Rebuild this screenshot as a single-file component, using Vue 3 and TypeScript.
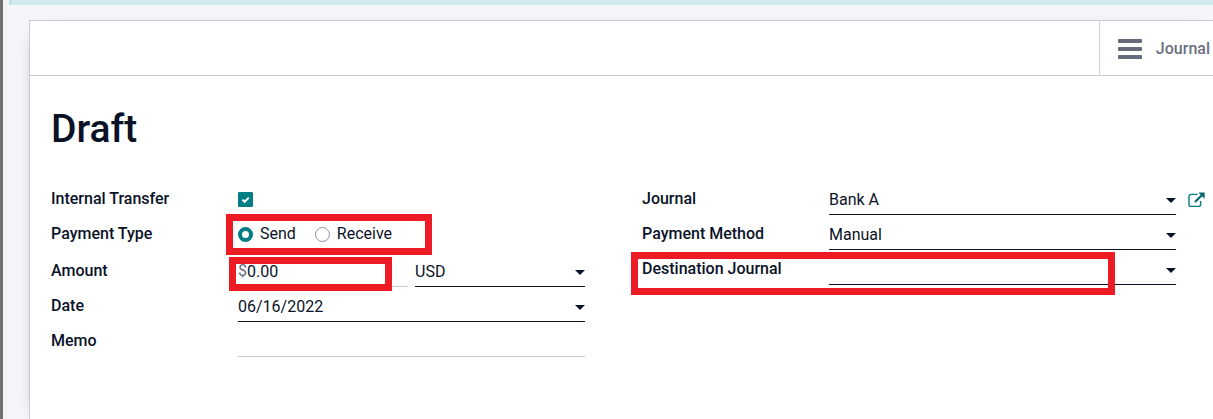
<script setup lang="ts">
import { ref } from 'vue'

const internalTransfer = ref(true)
const paymentType = ref<'send' | 'receive'>('send')
const amount = ref('0.00')
const currency = ref('USD')
const date = ref('06/16/2022')
const memo = ref('')
const journal = ref('Bank A')
const method = ref('Manual')
const destination = ref('')
</script>

<template>
  <div class="page">
    <div class="topbar"></div>
    <main class="sheet">
      <header class="buttons">
        <button type="button" class="stat">
          <svg class="bars" viewBox="0 0 24 20" aria-hidden="true">
            <rect width="24" height="4" rx="1" />
            <rect y="8" width="24" height="4" rx="1" />
            <rect y="16" width="24" height="4" rx="1" />
          </svg>
          <span>Journal</span>
        </button>
      </header>
      <form class="body" @submit.prevent>
        <h1>Draft</h1>
        <div class="groups">
          <div class="group">
            <div class="row">
              <label for="internal">Internal Transfer</label>
              <div class="cell">
                <span class="check">
                  <input id="internal" v-model="internalTransfer" type="checkbox" />
                  <svg v-if="internalTransfer" viewBox="0 0 15 15" aria-hidden="true">
                    <path d="M4.4 7.6 6.7 9.8 10.8 5.6" />
                  </svg>
                </span>
              </div>
            </div>
            <div class="row" role="radiogroup" aria-labelledby="ptype">
              <span id="ptype" class="label">Payment Type</span>
              <div class="cell tall">
                <label class="option"><input v-model="paymentType" type="radio" name="ptype" value="send" />Send</label>
                <label class="option"><input v-model="paymentType" type="radio" name="ptype" value="receive" />Receive</label>
                <span class="mark mark-type"></span>
              </div>
            </div>
            <div class="row">
              <label for="amount">Amount</label>
              <div class="cell split">
                <div class="field soft">
                  <span class="symbol">$</span>
                  <input id="amount" v-model="amount" type="text" />
                  <span class="mark mark-amount"></span>
                </div>
                <div class="field">
                  <select v-model="currency" aria-label="Currency">
                    <option>USD</option>
                  </select>
                  <svg class="caret" viewBox="0 0 10 5" aria-hidden="true"><path d="M0 0h10L5 5z" /></svg>
                </div>
              </div>
            </div>
            <div class="row">
              <label for="date">Date</label>
              <div class="field">
                <input id="date" v-model="date" type="text" />
                <svg class="caret" viewBox="0 0 10 5" aria-hidden="true"><path d="M0 0h10L5 5z" /></svg>
              </div>
            </div>
            <div class="row">
              <label for="memo">Memo</label>
              <div class="field soft"><input id="memo" v-model="memo" type="text" /></div>
            </div>
          </div>

          <div class="group">
            <div class="row">
              <label for="journal">Journal</label>
              <div class="cell">
                <div class="field">
                  <select id="journal" v-model="journal">
                    <option>Bank A</option>
                  </select>
                  <svg class="caret" viewBox="0 0 10 5" aria-hidden="true"><path d="M0 0h10L5 5z" /></svg>
                </div>
                <a class="external" href="#" aria-label="Open journal">
                  <svg viewBox="0 0 17 16" aria-hidden="true">
                    <path class="frame" d="M9.5 2.4H3a2 2 0 0 0-2 2v8a2 2 0 0 0 2 2h7.6a2 2 0 0 0 2-2V9" />
                    <path class="shaft" d="M7 10 14 3" />
                    <path class="head" d="M10.4.6h6.2v6.2z" />
                  </svg>
                </a>
              </div>
            </div>
            <div class="row">
              <label for="method">Payment Method</label>
              <div class="field">
                <select id="method" v-model="method">
                  <option>Manual</option>
                </select>
                <svg class="caret" viewBox="0 0 10 5" aria-hidden="true"><path d="M0 0h10L5 5z" /></svg>
              </div>
            </div>
            <div class="row">
              <label for="destination">Destination Journal</label>
              <div class="field">
                <select id="destination" v-model="destination">
                  <option value=""></option>
                </select>
                <svg class="caret" viewBox="0 0 10 5" aria-hidden="true"><path d="M0 0h10L5 5z" /></svg>
              </div>
              <span class="mark mark-destination"></span>
            </div>
          </div>
        </div>
      </form>
    </main>
  </div>
</template>

<style>
body {
  margin: 0;
}
</style>

<style scoped>
.page {
  box-sizing: border-box;
  min-height: 100vh;
  display: flex;
  flex-direction: column;
  border-left: 3px solid #707070;
  padding-left: 6px;
  background: linear-gradient(to right, #f4f3f1 6px, #f5f6fa 6px);
  overflow: hidden;
  color: #0a1227;
  font: 400 16px/20px Roboto, "Liberation Sans", sans-serif;
}
.topbar {
  height: 5px;
  border-left: 3px solid #bce3e9;
  background: #d2ebef;
}
.sheet {
  flex: 1;
  margin: 15px 0 0 20px;
  border: solid #c9cad4;
  border-width: 1px 0 0 1px;
  background: #fff;
  box-shadow: 0 5px 20px -15px #000;
}
.buttons {
  display: flex;
  justify-content: flex-end;
  height: 54px;
  border-bottom: 1px solid #c9cad4;
}
.stat {
  display: flex;
  align-items: center;
  gap: 14px;
  padding: 2px 3px 0 18px;
  border: 0;
  border-left: 1px solid #d3d4dc;
  background: none;
  color: #6b6f7f;
  font: inherit;
  font-weight: 500;
}
.bars {
  width: 24px;
  height: 20px;
  fill: #666b7c;
}
.body {
  padding: 29px 37px 24px 21px;
}
h1 {
  margin: 0 0 31px;
  font-size: 39px;
  line-height: 48px;
  font-weight: 500;
}
.groups {
  display: grid;
  grid-template-columns: 1fr 1fr;
  gap: 57px;
}
.group {
  display: flex;
  flex-direction: column;
  gap: 4px;
}
.row {
  position: relative;
  display: grid;
  grid-template-columns: 187px 1fr;
}
.row > label,
.label {
  line-height: 30px;
  font-weight: 500;
}
.cell {
  position: relative;
  display: flex;
  align-items: center;
  min-width: 0;
  min-height: 31px;
}
.tall {
  min-height: 33px;
  align-items: flex-start;
  gap: 19px;
}
.split {
  gap: 7px;
}
.field {
  position: relative;
  box-sizing: border-box;
  flex: 1;
  display: flex;
  align-items: center;
  min-width: 0;
  height: 31px;
  border-bottom: 1px solid #0a1227;
}
.soft {
  border-color: #ccc;
}
.field input,
.field select {
  appearance: none;
  box-sizing: border-box;
  flex: 1;
  min-width: 0;
  width: 100%;
  height: 30px;
  margin: 0;
  padding: 0;
  border: 0;
  outline: 0;
  background: none;
  color: inherit;
  font: inherit;
}
.field select {
  padding-top: 2px;
}
.symbol {
  color: #666b7c;
}
.caret {
  position: absolute;
  right: 0;
  top: 14px;
  width: 10px;
  height: 5px;
  fill: #0a1227;
  pointer-events: none;
}
.check {
  position: relative;
  display: flex;
}
.check input {
  appearance: none;
  box-sizing: border-box;
  width: 15px;
  height: 15px;
  margin: 0;
  border: 1px solid #017e84;
  border-radius: 1px;
}
.check input:checked {
  background: #017e84;
}
.check svg {
  position: absolute;
  inset: 0;
  fill: none;
  stroke: #fff;
  stroke-width: 2;
  pointer-events: none;
}
.option {
  display: flex;
  align-items: center;
  gap: 7px;
  line-height: 30px;
}
.option input {
  appearance: none;
  box-sizing: border-box;
  width: 15px;
  height: 15px;
  margin: 1px 0 0;
  border: 1px solid #8d90a0;
  border-radius: 50%;
}
.option input:checked {
  border: 4px solid #017e84;
}
.external {
  width: 17px;
  height: 16px;
  margin: 0 -29px 0 12px;
}
.external svg {
  display: block;
}
.frame,
.shaft {
  fill: none;
  stroke: #017e84;
  stroke-width: 1.4;
}
.shaft {
  stroke: #01666b;
  stroke-width: 2.2;
}
.head {
  fill: #01666b;
}
.mark {
  position: absolute;
  border: 7px solid #ed1c24;
  pointer-events: none;
}
.mark-type {
  inset: -5px auto -3px -12px;
  width: 192px;
}
.mark-amount {
  inset: 1px 16px -5px -9px;
}
.mark-destination {
  inset: -2px 61px -10px -11px;
}
</style>
